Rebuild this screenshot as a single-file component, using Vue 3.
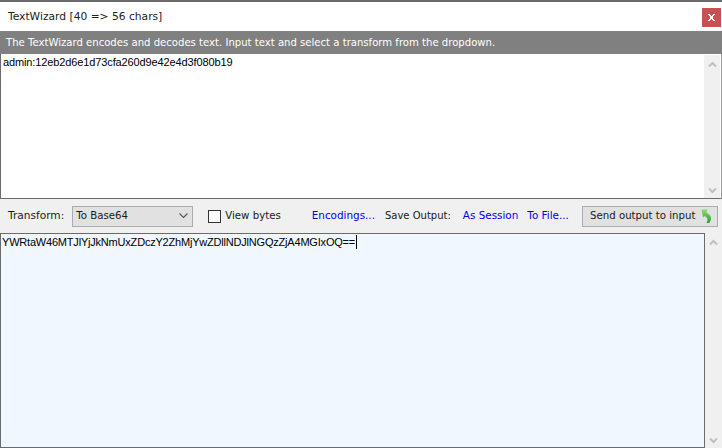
<template>
  <div class="window">
    <header class="titlebar">
      <span class="title">TextWizard [40 =&gt; 56 chars]</span>
      <span class="close">
        <svg width="7" height="7" viewBox="0 0 7 7"><path d="M0 0h2v1h1v1h1V1h1V0h2v1H6v1H5v3h1v1h1v1H5V6H4V5H3v1H2v1H0V6h1V5h1V2H1V1H0z" fill="#fff"/></svg>
      </span>
    </header>
    <div class="info">The TextWizard encodes and decodes text. Input text and select a transform from the dropdown.</div>
    <section class="input-pane">
      <div class="text input">admin:12eb2d6e1d73cfa260d9e42e4d3f080b19</div>
      <div class="scrollbar white">
        <svg class="arrow" width="9" height="7" viewBox="0 0 9 7"><path d="M1 5.500l3.500-3.500 3.500 3.500" /></svg>
        <svg class="arrow" width="9" height="7" viewBox="0 0 9 7"><path d="M1 1.500l3.500 3.500 3.500-3.500" /></svg>
      </div>
    </section>
    <div class="toolbar">
      <span class="label transform">Transform:</span>
      <div class="select">
        <span class="lift">To Base64</span>
        <svg width="9" height="6" viewBox="0 0 9 6"><path d="M.5.500l4 4 4-4" fill="none" stroke="#555" stroke-width="1.100"/></svg>
      </div>
      <span class="check"></span>
      <span class="label view">View bytes</span>
      <a class="link enc">Encodings...</a>
      <span class="label save">Save Output:</span>
      <a class="link session">As Session</a>
      <a class="link file">To File...</a>
      <button class="send">
        <span class="lift">Send output to input</span>
        <svg width="11" height="14" viewBox="0 0 11 14">
          <defs>
            <linearGradient id="sendGreen" x1="0" y1="0" x2="0" y2="1">
              <stop offset="0" stop-color="#86e06a"/>
              <stop offset="1" stop-color="#2f9a35"/>
            </linearGradient>
          </defs>
          <path d="M.5.500H6.500L5.500 3.500C8 5 10.500 7 10 10 9.800 11.500 9 13 8 14H5.500C6.500 12 7 10.500 6 9 5.500 8.200 4.500 7.500 3.500 7L2 8.500Z" fill="url(#sendGreen)"/>
        </svg>
      </button>
    </div>
    <section class="output-pane">
      <div class="text output"><span>YWRtaW46MTJlYjJkNmUxZDczY2ZhMjYwZDllNDJlNGQzZjA4MGIxOQ==</span><i class="caret"></i></div>
      <div class="scrollbar wide">
        <svg class="arrow" width="9" height="7" viewBox="0 0 9 7"><path d="M1 5.500l3.500-3.500 3.500 3.500" /></svg>
        <svg class="arrow" width="9" height="7" viewBox="0 0 9 7"><path d="M1 1.500l3.500 3.500 3.500-3.500" /></svg>
      </div>
    </section>
  </div>
</template>

<script setup>
</script>

<style>
html, body { margin: 0; padding: 0; background: #f0f0f0; }
</style>

<style scoped>
.window {
  width: 722px;
  height: 448px;
  box-sizing: border-box;
  display: flex;
  flex-direction: column;
  border-top: 2px solid #6b6b6b;
  background: #f0f0f0;
  font-family: "DejaVu Sans", sans-serif;
  font-size: 10.2px;
  color: #1a1a1a;
  overflow: hidden;
}
.titlebar {
  height: 29px;
  background: #fff;
  display: flex;
  align-items: center;
  justify-content: space-between;
  padding: 0 1px 0 8px;
  flex: none;
}
.title { font-size: 10.7px; color: #222; }
.close {
  width: 19px;
  height: 19px;
  background: #c75050;
  display: flex;
  align-items: center;
  justify-content: center;
  margin-top: 1px;
}
.info {
  height: 23px;
  line-height: 23px;
  flex: none;
  background: #808080;
  color: #fff;
  padding-left: 6px;
  font-size: 10.1px;
  white-space: nowrap;
}
.input-pane {
  height: 145px;
  flex: none;
  box-sizing: border-box;
  background: #fff;
  display: flex;
  border-left: 1px solid #6b6b6b;
  border-right: 1px solid #9a9a9a;
  border-bottom: 1px solid #6b6b6b;
}
.text {
  flex: 1;
  font-family: "Liberation Sans", sans-serif;
  font-size: 11px;
  line-height: 15px;
  padding: 1px 0 0 2px;
  color: #000;
}
.input { letter-spacing: -0.12px; }
.scrollbar {
  width: 16px;
  flex: none;
  background: #f0f0f0;
  display: flex;
  flex-direction: column;
  justify-content: space-between;
  align-items: center;
  padding: 6px 0 4px;
  box-sizing: border-box;
}
.scrollbar.white { margin: 1px 1px 0 0; }
.scrollbar.wide { width: 17px; }
.arrow path { fill: none; stroke: #c0c0c0; stroke-width: 2; }
.toolbar {
  height: 34px;
  flex: none;
  display: flex;
  align-items: center;
  padding: 0 4px 0 8px;
  box-sizing: border-box;
}
.label, .link, .lift { white-space: nowrap; padding-bottom: 2px; }
.transform { font-size: 10.6px; }
.select {
  margin-left: 8px;
  width: 121px;
  height: 21px;
  box-sizing: border-box;
  border: 1px solid #acacac;
  background: #e1e1e1;
  display: flex;
  align-items: center;
  justify-content: space-between;
  padding: 0 4px 0 3px;
  flex: none;
}
.check {
  margin-left: 15px;
  width: 13px;
  height: 13px;
  box-sizing: border-box;
  border: 1px solid #333;
  background: #fff;
  flex: none;
}
.view { margin-left: 4px; }
.link { color: #0000ee; }
.enc { margin-left: 31px; font-size: 10.4px; }
.save { margin-left: 10px; font-size: 10px; }
.session { margin-left: 12px; font-size: 10.4px; }
.file { margin-left: 9px; font-size: 10.4px; }
.send {
  margin-left: auto;
  width: 136px;
  height: 21px;
  box-sizing: border-box;
  border: 1px solid #adadad;
  background: #e1e1e1;
  font: inherit;
  color: inherit;
  display: flex;
  align-items: center;
  justify-content: space-between;
  padding: 0 5px 0 7px;
  white-space: nowrap;
}
.output-pane {
  flex: 1;
  display: flex;
  min-height: 0;
}
.output {
  border: 1px solid #6b6b6b;
  background: #f0f7ff;
  padding: 1px 0 0 1px;
  display: flex;
  align-items: flex-start;
  box-sizing: border-box;
  letter-spacing: -0.2px;
}
.caret {
  width: 1px;
  height: 14px;
  background: #000;
  margin-left: 1px;
}
</style>
